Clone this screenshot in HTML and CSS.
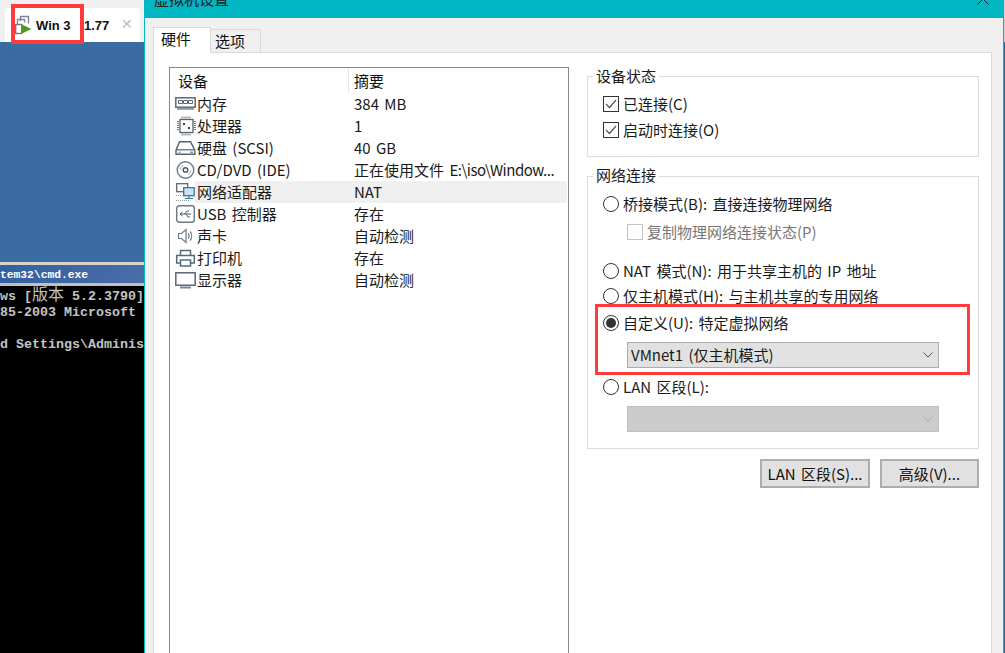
FILE: index.html
```html
<!DOCTYPE html>
<html lang="zh">
<head>
<meta charset="utf-8">
<title>虚拟机设置</title>
<link rel="stylesheet" href="styles.css">
</head>
<body>
<div class="desktop">
  <section class="vm">
    <div class="tabstrip">
      <div class="vmtab">
        <svg class="vmicon" width="17" height="20" viewBox="0 0 17 20"><path d="M5.500 6V1.500h8v7M2.500 9.500V4.500h7v3" fill="none" stroke="#7f8892" stroke-width="1.400"/><rect x="0.700" y="9.500" width="6" height="9" fill="#fff" stroke="#6f7a85" stroke-width="1.400"/><path d="M7 9.500l9.500 4.500L7 18.500z" fill="#4f9a1e"/></svg>
        <span class="vmname">Win 3</span><span class="vmip">1.77</span>
        <span class="vmclose">✕</span>
      </div>
    </div>
    <div class="guest"></div>
    <div class="cmd">
      <div class="cmdtitle">tem32\cmd.exe</div>
      <div class="cmdbody">
        <div class="cl">ws [<span class="zh">版本</span> 5.2.3790]</div>
        <div class="cl">85-2003 Microsoft</div>
        <div class="cl cl3">d Settings\Adminis</div>
      </div>
    </div>
  </section>

  <section class="dialog">
    <header class="titlebar">
      <span class="dtitle">虚拟机设置</span>
      <svg class="dclose" width="12" height="12" viewBox="0 0 12 12"><path d="M0.500 0.500l11 11M11.500 0.500l-11 11" stroke="#222" stroke-width="1" fill="none"/></svg>
    </header>
    <div class="tabs">
      <div class="tab active">硬件</div>
      <div class="tab">选项</div>
    </div>
    <div class="page">
      <div class="list">
        <div class="lhead"><div class="c1">设备</div><div class="c2">摘要</div></div>
        <div class="row"><svg class="ri" width="22" height="20" viewBox="0 0 22 20"><rect x="0.800" y="3.800" width="19.400" height="9.400" fill="#fff" stroke="#5b6873" stroke-width="1.500"/><path d="M3.500 6.500h4v3h-4zM8.500 6.500h4v3h-4zM13.500 6.500h4v3h-4z" fill="none" stroke="#5b6873"/><path d="M2 14.800h17" stroke="#8b98a3" stroke-width="2"/></svg><div class="c1">内存</div><div class="c2">384 MB</div></div>
        <div class="row"><svg class="ri" width="22" height="20" viewBox="0 0 22 20"><rect x="5" y="3.500" width="13" height="13" fill="#fff" stroke="#56636e" stroke-width="1.300"/><path d="M2 5.500h2M2 7.500h2M2 9.500h2M2 11.500h2M2 13.500h2M19 5.500h2M19 7.500h2M19 9.500h2M19 11.500h2M19 13.500h2M7 0.500v2M9 0.500v2M11 0.500v2M13 0.500v2M15 0.500v2M7 17.500v2M9 17.500v2M11 17.500v2M13 17.500v2M15 17.500v2" stroke="#6b7985"/><path d="M8 7h2v2H8zM13 11h2v2h-2z" fill="#39434c"/></svg><div class="c1">处理器</div><div class="c2">1</div></div>
        <div class="row"><svg class="ri" width="22" height="20" viewBox="0 0 22 20"><path d="M4.500 3.700h11l4.300 8.500v4.100H1v-4.100z" fill="#fff" stroke="#56636e" stroke-width="1.400"/><path d="M1 11.800h19" stroke="#56636e" stroke-width="1.200"/><path d="M3 14.200h3" stroke="#8b98a3"/><path d="M15 14.200h3" stroke="#3f6a8f"/></svg><div class="c1">硬盘 (SCSI)</div><div class="c2">40 GB</div></div>
        <div class="row"><svg class="ri" width="22" height="20" viewBox="0 0 22 20"><circle cx="10.500" cy="10" r="8.300" fill="#fff" stroke="#6b7985" stroke-width="1.400"/><circle cx="10.500" cy="10" r="2.300" fill="none" stroke="#4e5a65" stroke-width="1.400"/><path d="M5 10a5.500 5.500 0 0 1 3-4.800M16 10a5.500 5.500 0 0 1-3 4.800" fill="none" stroke="#aab3ba"/></svg><div class="c1">CD/DVD (IDE)</div><div class="c2">正在使用文件 <span class="path">E:\iso\Window...</span></div></div>
        <div class="row selected"><svg class="ri" width="22" height="20" viewBox="0 0 22 20"><rect x="1.700" y="1.700" width="11" height="8" fill="#fff" stroke="#56697a" stroke-width="1.300"/><rect x="8.700" y="5.700" width="10.500" height="8" fill="#cfe2f2" stroke="#2f78ad" stroke-width="1.300"/><path d="M14 14v2M10 16.500h8" stroke="#2f78ad" stroke-width="1.200"/><path d="M1 13.500h6M1 18.500h14" stroke="#8f9aa3" stroke-dasharray="1 1"/></svg><div class="c1">网络适配器</div><div class="c2">NAT</div></div>
        <div class="row"><svg class="ri" width="22" height="20" viewBox="0 0 22 20"><rect x="1.700" y="1.700" width="17.600" height="16.600" rx="2.500" fill="#fff" stroke="#6b7985" stroke-width="1.400"/><path d="M5 10h11M5 10l2.500-2M5 10l2.500 2M9.500 10l2.500-3h2M11 10l2 3h2" fill="none" stroke="#4e5a65"/></svg><div class="c1">USB 控制器</div><div class="c2">存在</div></div>
        <div class="row"><svg class="ri" width="22" height="20" viewBox="0 0 22 20"><path d="M3.500 7.500h3l4.500-4v13l-4.500-4h-3z" fill="#fff" stroke="#6b7985" stroke-width="1.200"/><path d="M13 7.500a3.500 3.500 0 0 1 0 5M15 5.500a7 7 0 0 1 0 9" fill="none" stroke="#6b7985" stroke-width="1.200"/></svg><div class="c1">声卡</div><div class="c2">自动检测</div></div>
        <div class="row"><svg class="ri" width="22" height="20" viewBox="0 0 22 20"><path d="M5.500 7.500V2.500h10v5M5.500 15H1.700V7.500h17.600V15h-3.800" fill="#fff" stroke="#56697a" stroke-width="1.500"/><rect x="5.500" y="12" width="10" height="6" fill="#fff" stroke="#56697a" stroke-width="1.500"/></svg><div class="c1">打印机</div><div class="c2">存在</div></div>
        <div class="row"><svg class="ri" width="22" height="20" viewBox="0 0 22 20"><rect x="0.800" y="2.800" width="19.400" height="12.400" fill="#fff" stroke="#56697a" stroke-width="1.500"/><path d="M5 17.500h11" stroke="#7c8993" stroke-width="2"/></svg><div class="c1">显示器</div><div class="c2">自动检测</div></div>
      </div>

      <div class="side">
        <fieldset class="group status">
          <legend>设备状态</legend>
          <label class="opt first"><span class="check"><svg width="12" height="12" viewBox="0 0 12 12"><path d="M1 6l3.500 3.500L11 2" fill="none" stroke="#555" stroke-width="1.200"/></svg></span>已连接(C)</label>
          <label class="opt second"><span class="check"><svg width="12" height="12" viewBox="0 0 12 12"><path d="M1 6l3.500 3.500L11 2" fill="none" stroke="#555" stroke-width="1.200"/></svg></span>启动时连接(O)</label>
        </fieldset>
        <fieldset class="group net">
          <legend>网络连接</legend>
          <label class="opt bridged"><span class="radio"></span>桥接模式(B): 直接连接物理网络</label>
          <label class="opt sub"><span class="check"></span>复制物理网络连接状态(P)</label>
          <label class="opt nat"><span class="radio"></span>NAT 模式(N): 用于共享主机的 IP 地址</label>
          <label class="opt host"><span class="radio"></span>仅主机模式(H): 与主机共享的专用网络</label>
          <label class="opt custom"><span class="radio on"></span>自定义(U): 特定虚拟网络</label>
          <div class="select"><span class="seltext">VMnet1 (仅主机模式)</span><svg width="10" height="6" viewBox="0 0 10 6"><path d="M0.500 0.500l4.500 4.500 4.500-4.500" fill="none" stroke="#555"/></svg></div>
          <label class="opt lan"><span class="radio"></span>LAN 区段(L):</label>
          <div class="select disabled"><svg width="10" height="6" viewBox="0 0 10 6"><path d="M0.500 0.500l4.500 4.500 4.500-4.500" fill="none" stroke="#a8a8a8"/></svg></div>
        </fieldset>
        <div class="buttons">
          <div class="btn b1">LAN 区段(S)...</div>
          <div class="btn b2">高级(V)...</div>
        </div>
      </div>
    </div>
  </section>
  <div class="edge"></div>

  <div class="mark mark-tab"></div>
  <div class="mark mark-custom"></div>
</div>
</body>
</html>
```
FILE: styles.css
```css
* { box-sizing: border-box; }
html, body { margin: 0; padding: 0; height: 100%; overflow: hidden; }
body { font-family: "Noto Sans CJK SC", "Noto Sans", sans-serif; font-size: 15px; word-spacing: 2px; color: #1a1a1a; background: #f0f0f0; }
.desktop { position: relative; width: 1005px; height: 653px; overflow: hidden; display: flex; }

.vm { width: 144px; height: 653px; flex: none; display: flex; flex-direction: column; overflow: hidden; background: #000; word-spacing: 0; }
.tabstrip { height: 42px; flex: none; background: #f0f0f0; padding: 8px 0 0 5px; }
.vmtab { height: 34px; width: 135px; background: #fff; border-radius: 4px 4px 0 0; display: flex; align-items: center; padding: 0 0 0 10px; font: bold 13px "Liberation Sans", sans-serif; color: #111; position: relative; }
.vmicon { flex: none; margin-right: 4px; }
.vmname { width: 48px; flex: none; }
.vmip { flex: none; }
.vmclose { position: absolute; left: 116px; top: 8px; color: #bdbdbd; font: bold 14px "DejaVu Sans", sans-serif; }
.guest { height: 220px; flex: none; background: #3a6ba3; }
.cmd { flex: 1; display: flex; flex-direction: column; }
.cmdtitle { height: 24px; flex: none; padding-top: 2px; border-top: 3px solid #d8d4c8; border-bottom: 3px solid #c2c0b7; background: linear-gradient(to right, #33609f, #4a6cab); color: #fff; font: bold 11.300px/16px "Liberation Mono", monospace; white-space: nowrap; }
.cmdbody { flex: 1; background: #000; color: #c4c4c4; font: bold 13.330px/16px "Liberation Mono", monospace; white-space: nowrap; padding-top: 3px; }
.zh { font: 16px/0 "Noto Sans CJK SC", sans-serif; }
.cl { height: 16px; }
.cl3 { margin-top: 16px; }

.dialog { width: 859px; height: 653px; flex: none; background: #f0f0f0; border-left: 1px solid #00b7c3; display: flex; flex-direction: column; }
.titlebar { height: 18px; flex: none; background: #00b7c3; display: flex; justify-content: space-between; padding: 0 14px 0 9px; }
.dtitle { display: block; height: 16px; margin-top: -9px; font-size: 15px; line-height: 16px; color: #222; word-spacing: 0; }
.dclose { margin-top: -7px; }
.tabs { display: flex; align-items: flex-end; height: 34px; flex: none; padding-left: 8px; }
.tab { height: 23px; width: 50px; padding-left: 4px; background: #f0f0f0; border: 1px solid #d9d9d9; border-bottom: 0; border-left: 0; line-height: 22px; color: #111; }
.tab.active { width: 58px; height: 26px; padding-left: 7px; background: #fff; border-left: 1px solid #d9d9d9; margin-bottom: -1px; position: relative; }
.page { flex: 1; width: 839px; margin-left: 8px; background: #fff; border: 1px solid #d9d9d9; border-bottom: 0; display: flex; padding: 14px 0 0 15px; gap: 18px; }

.list { width: 400px; height: 700px; flex: none; border: 1px solid #828790; background: #fff; }
.lhead { height: 25px; display: flex; align-items: center; color: #111; }
.lhead .c1 { width: 179px; padding-left: 8px; border-right: 1px solid #e5e5e5; height: 25px; line-height: 26px; }
.lhead .c2 { line-height: 26px; }
.row { height: 22px; display: flex; align-items: center; line-height: 22px; white-space: nowrap; padding-left: 5px; }
.row .c1 { width: 152px; flex: none; }
.c2 { padding-left: 5px; }
.path { letter-spacing: -0.500px; }
.ri { width: 22px; flex: none; }
.row.selected { background: linear-gradient(to right, #fff 25px, #f0f0f0 25px, #f0f0f0 397px, #fff 397px); }

.side { width: 392px; flex: none; display: flex; flex-direction: column; }
.group { margin: 0; padding: 0; border: 1px solid #dcdcdc; position: relative; }
.group legend { position: absolute; left: 5px; top: -11px; padding: 0 3px; line-height: 20px; background: #fff; }
.net legend { top: -12px; }
.status { height: 81px; margin-top: 9px; }
.net { height: 273px; margin-top: 19px; }
.opt { display: flex; align-items: center; position: absolute; left: 15px; white-space: nowrap; line-height: 20px; }
.check { width: 16px; height: 16px; flex: none; margin-right: 4px; border: 1px solid #333; display: flex; align-items: center; justify-content: center; background: #fff; }
.radio { width: 16px; height: 16px; flex: none; margin-right: 4px; border: 1px solid #333; border-radius: 50%; background: #fff; position: relative; }
.radio.on::after { content: ""; position: absolute; left: 2px; top: 2px; width: 10px; height: 10px; border-radius: 50%; background: #333; }
.first { top: 17px; }
.second { top: 43px; }
.bridged { top: 17px; }
.sub { top: 45px; left: 39px; color: #777; }
.sub .check { border-color: #c4c4c4; }
.nat { top: 84px; }
.host { top: 109px; }
.custom { top: 136px; }
.lan { top: 200px; }
.select { position: absolute; left: 39px; width: 312px; height: 26px; background: #e1e1e1; border: 1px solid #adadad; display: flex; align-items: center; justify-content: space-between; padding: 0 5px 0 3px; top: 165px; }
.seltext { line-height: 22px; margin-top: -1px; }
.select.disabled { top: 229px; background: #ccc; border-color: #bfbfbf; justify-content: flex-end; }
.buttons { display: flex; justify-content: flex-end; gap: 10px; margin-top: 10px; }
.btn { height: 29px; background: #e1e1e1; border: 2px solid #adadad; text-align: center; line-height: 25px; color: #111; white-space: nowrap; }
.b1 { width: 110px; }
.b2 { width: 99px; }
.edge { width: 2px; flex: none; border-left: 1px solid #00b7c3; background: linear-gradient(#c9d3d8 42px, #1f6a96 42px); }

.mark { position: absolute; pointer-events: none; }
.mark-tab { left: 11px; top: 4px; width: 73px; height: 40px; border: 4px solid #ff3b3b; }
.mark-custom { left: 595px; top: 304px; width: 375px; height: 71px; border: 3px solid #ff3b3b; }
```
